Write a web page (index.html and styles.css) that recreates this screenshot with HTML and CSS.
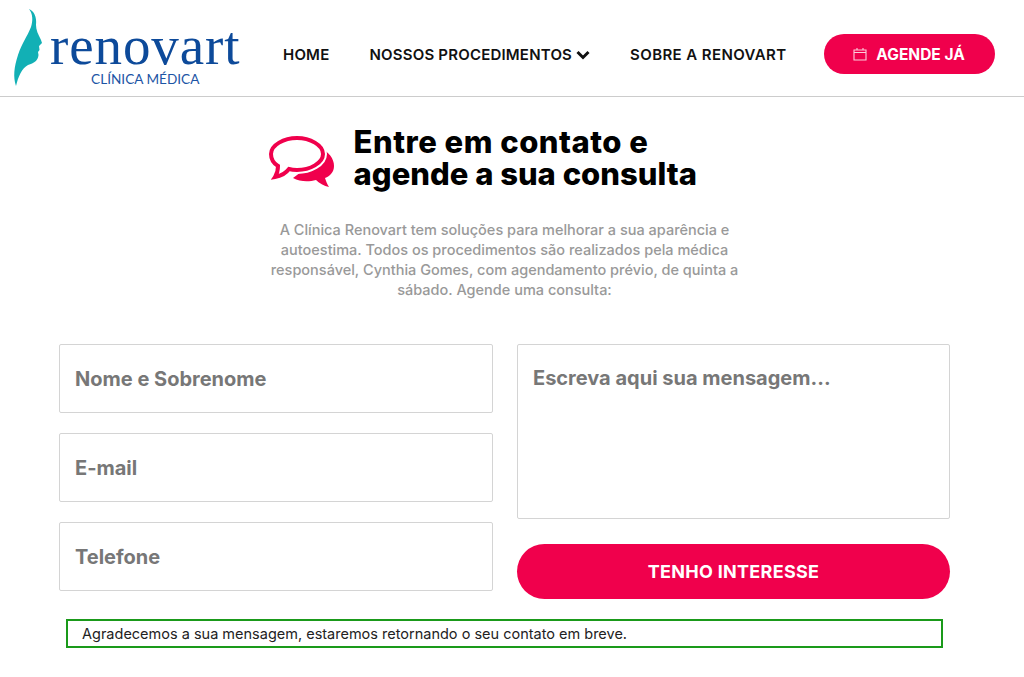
FILE: index.html
```html
<!DOCTYPE html>
<html lang="pt-BR">
<head>
    <meta charset="UTF-8">
    <meta name="viewport" content="width=device-width, initial-scale=1.0">
    <title>Renovart - Contato</title>
    <link rel="stylesheet" href="styles.css">
</head>
<body>
    <header class="site-header">
        <a class="logo" href="#">
            <svg class="logo-face" viewBox="0 0 45 90" width="45" height="90">
                <path fill="#12b0b5" d="M29 8C34 10 37 16 36 24C36 29 38 33 41 39L42 42L39 45L39.5 49L38 51L38.5 54C38 60 34 62 28 64C22 67 18 76 16 85C13 76 14 66 18 54C22 42 27 36 31 26C33 20 33 13 29 8Z"/>
            </svg>
            <span class="logo-text">
                <span class="logo-name">renovart</span>
                <span class="logo-sub">CLÍNICA MÉDICA</span>
            </span>
        </a>
        <nav class="main-nav">
            <a href="#">HOME</a>
            <a href="#" class="nav-drop">NOSSOS PROCEDIMENTOS
                <svg viewBox="0 0 14 10" width="14" height="10"><path d="M1.5 2L7 7.5L12.5 2" fill="none" stroke="#111" stroke-width="3"/></svg>
            </a>
            <a href="#" class="nav-about">SOBRE A RENOVART</a>
        </nav>
        <a class="cta" href="#">
            <svg viewBox="0 0 14 14" width="14" height="14"><path d="M1 3H13V13H1ZM1 5.5H13M4 1V3M10 1V3" fill="none" stroke="#fff" stroke-opacity="0.8" stroke-width="1.1"/></svg>
            AGENDE JÁ
        </a>
    </header>

    <main class="contact">
        <div class="contact-title">
            <svg class="bubbles" viewBox="0 0 65 52" width="65" height="52">
                <path fill="#f0004c" d="M50 12C60 15 65 23 65 30C65 36 61 40 56 42C57 45 58 48 60 51C55 50 50 47 47 44C40 46 31 46 24 42L40 30Z"/>
                <path fill="#fff" stroke="#fff" stroke-width="8" d="M28 2C41 2 54 9 54 18C54 27 41 34 28 34C25 34 22 33.6 20 33C17 37 12 40 6 41C8 38 9 35 9 30C4 27 2 23 2 18C2 9 15 2 28 2Z"/>
                <path fill="#fff" stroke="#f0004c" stroke-width="4" d="M28 2C41 2 54 9 54 18C54 27 41 34 28 34C25 34 22 33.6 20 33C17 37 12 40 6 41C8 38 9 35 9 30C4 27 2 23 2 18C2 9 15 2 28 2Z"/>
            </svg>
            <h1>Entre em contato e<br>agende a sua consulta</h1>
        </div>
        <p class="intro">A Clínica Renovart tem soluções para melhorar a sua aparência e autoestima. Todos os procedimentos são realizados pela médica responsável, Cynthia Gomes, com agendamento prévio, de quinta a sábado. Agende uma consulta:</p>

        <form class="contact-form">
            <div class="form-col">
                <input type="text" placeholder="Nome e Sobrenome">
                <input type="text" placeholder="E-mail">
                <input type="text" placeholder="Telefone">
            </div>
            <div class="form-col">
                <textarea placeholder="Escreva aqui sua mensagem..."></textarea>
                <button type="submit" class="submit-btn">TENHO INTERESSE</button>
            </div>
        </form>
        <div class="form-status">Agradecemos a sua mensagem, estaremos retornando o seu contato em breve.</div>
    </main>
</body>
</html>
```

FILE: styles.css
```css
* {
    box-sizing: border-box;
}
body {
    margin: 0;
    background: #fff;
    font-family: 'Inter', sans-serif;
    color: #111;
}
a {
    text-decoration: none;
    color: inherit;
}
.site-header {
    display: flex;
    align-items: center;
    height: 97px;
    border-bottom: 1px solid #ccc;
}
.logo {
    display: flex;
    align-items: flex-start;
    width: 283px;
    height: 96px;
}
.logo-face {
    flex: none;
    margin-top: 1px;
}
.logo-text {
    display: flex;
    flex-direction: column;
    align-items: center;
    margin-left: 5px;
    margin-top: 21px;
}
.logo-name {
    font-family: 'Liberation Serif', serif;
    font-size: 55px;
    line-height: 50px;
    color: #0d4a9a;
    letter-spacing: 0.9px;
}
.logo-sub {
    font-family: 'Lato', sans-serif;
    font-size: 13.6px;
    line-height: 17px;
    color: #1d55a5;
}
.main-nav {
    display: flex;
    align-items: center;
    gap: 40px;
    margin-top: 12px;
    font-size: 15px;
    letter-spacing: 0.2px;
    font-weight: 600;
}
.nav-about {
    letter-spacing: 0.4px;
}
.cta {
    display: flex;
    align-items: center;
    justify-content: center;
    gap: 9px;
    width: 171px;
    height: 40px;
    margin-top: 12px;
    margin-left: 37px;
    border-radius: 20px;
    background: #f0004c;
    color: #fff;
    font-size: 15.5px;
    font-weight: 700;
}
.contact {
    padding: 0 74px 0 59px;
}
.contact-title {
    display: flex;
    align-items: center;
    justify-content: center;
    gap: 20px;
    margin-top: 29px;
    padding-right: 33px;
}
.bubbles {
    flex: none;
    margin-top: 8px;
}
h1 {
    margin: 0;
    font-size: 31px;
    line-height: 32px;
    font-weight: 800;
    color: #000;
}
h1::first-line {
    letter-spacing: 0.5px;
}
.intro {
    width: 480px;
    margin: 30px auto 0 auto;
    font-size: 14.5px;
    line-height: 20px;
    text-align: center;
    color: #999;
    font-weight: 500;
}
.contact-form {
    display: grid;
    grid-template-columns: 434px 433px;
    gap: 24px;
    margin-top: 44px;
}
.form-col {
    display: flex;
    flex-direction: column;
}
input,
textarea {
    display: block;
    width: 100%;
    border: 1px solid #d4d4d4;
    border-radius: 2px;
    padding: 0 15px;
    font-family: inherit;
    font-size: 20px;
    font-weight: 700;
    background: #fff;
    outline: none;
    resize: none;
}
input {
    height: 69px;
    margin-bottom: 20px;
}
input:last-child {
    margin-bottom: 0;
}
textarea {
    height: 175px;
    padding-top: 21px;
}
input::placeholder,
textarea::placeholder {
    color: #777;
    opacity: 1;
}
.submit-btn {
    height: 55px;
    margin-top: 25px;
    border: none;
    border-radius: 28px;
    background: #f0004c;
    color: #fff;
    font-family: inherit;
    font-size: 18px;
    letter-spacing: 0.3px;
    font-weight: 700;
    cursor: pointer;
}
.form-status {
    width: 877px;
    height: 29px;
    margin: 20px 0 0 7px;
    padding: 0 14px;
    border: 2px solid #1a9a1a;
    font-size: 14.5px;
    line-height: 25px;
    color: #222;
}
```
